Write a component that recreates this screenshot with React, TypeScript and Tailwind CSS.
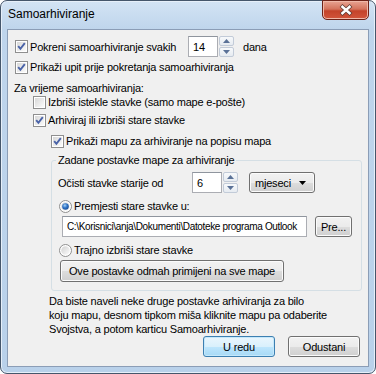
import React from 'react';

const btnBase =
  'flex items-center rounded-[3px] border border-[#707070] bg-[linear-gradient(to_bottom,#f2f2f2_0%,#ebebeb_50%,#dddddd_51%,#cfcfcf_100%)] shadow-[inset_0_0_0_1px_#fbfbfb] text-black';
const btn = `${btnBase} justify-center`;

function Check({ checked }: { checked?: boolean }) {
  return (
    <svg width="13" height="13" viewBox="0 0 13 13" className="shrink-0">
      <defs>
        <linearGradient id="cbfill" x1="0" y1="0" x2="1" y2="1">
          <stop offset="0" stopColor="#d8d8d8" />
          <stop offset="1" stopColor="#fbfbfb" />
        </linearGradient>
      </defs>
      <rect x="0.5" y="0.5" width="12" height="12" fill="#fff" stroke="#8f8f8f" />
      <rect x="2" y="2" width="9" height="9" fill="url(#cbfill)" />
      {checked && (
        <path d="M3.2 6.2 L5.4 8.8 L9.8 3.2" fill="none" stroke="#4a63a8" strokeWidth="1.9" />
      )}
    </svg>
  );
}

function Radio({ checked }: { checked?: boolean }) {
  return (
    <svg width="13" height="13" viewBox="0 0 13 13" className="shrink-0">
      <defs>
        <linearGradient id="rbfill" x1="0" y1="0" x2="1" y2="1">
          <stop offset="0" stopColor="#d2d2d2" />
          <stop offset="1" stopColor="#fcfcfc" />
        </linearGradient>
        <radialGradient id="rbdot" cx="0.4" cy="0.35" r="0.7">
          <stop offset="0" stopColor="#a9d3f5" />
          <stop offset="0.5" stopColor="#2f74c8" />
          <stop offset="1" stopColor="#1b4e92" />
        </radialGradient>
      </defs>
      <circle cx="6.5" cy="6.5" r="6" fill="#fff" stroke="#8f8f8f" />
      <circle cx="6.5" cy="6.5" r="4.3" fill="url(#rbfill)" />
      {checked && <circle cx="6.5" cy="6.5" r="3.3" fill="url(#rbdot)" />}
    </svg>
  );
}

function Spin() {
  const part =
    'flex h-[10px] w-[15px] items-center justify-center rounded-[2px] border border-[#c2cbd8] bg-[linear-gradient(to_bottom,#f7f9fb,#e6ebf1)]';
  return (
    <div className="ml-[1px] flex h-[21px] flex-col justify-between">
      <div className={part}>
        <svg width="7" height="4" viewBox="0 0 7 4">
          <path d="M0 4 L3.5 0 L7 4 Z" fill="#5a7197" />
        </svg>
      </div>
      <div className={part}>
        <svg width="7" height="4" viewBox="0 0 7 4">
          <path d="M0 0 L3.5 4 L7 0 Z" fill="#5a7197" />
        </svg>
      </div>
    </div>
  );
}

function Field({ value, w }: { value: string; w: string }) {
  return (
    <div
      className={`flex h-[21px] items-center border border-[#abadb3] border-t-[#8f959e] bg-white pl-[4px] ${w}`}
    >
      {value}
    </div>
  );
}

export default function App() {
  return (
    <div className="h-[374px] w-[376px] bg-white font-['Liberation_Sans',Arial,sans-serif] text-[11px] leading-[14px] tracking-[-0.2px] text-black">
      <div className="relative flex h-[374px] w-[376px] flex-col rounded-[7px] border border-[#45566b] bg-[linear-gradient(to_bottom,#d3e3f4_0px,#bfd5ec_28px,#b9d1ea_100%)] px-[6px] pb-[6px] shadow-[inset_0_0_0_1px_#e6eff9]">
        {/* title bar */}
        <div className="flex h-[28px] items-center pb-[2px] pl-[1px] text-[12px] tracking-normal">Samoarhiviranje</div>
        <div className="absolute right-[6px] top-[-1px] flex h-[20px] w-[47px] items-center justify-center rounded-b-[5px] border border-[#6e2318] bg-[linear-gradient(to_bottom,#e8a493_0%,#d4735c_45%,#c4432a_55%,#d2553b_100%)] shadow-[inset_0_0_0_1px_#f0b8a8]">
          <svg width="14" height="12" viewBox="0 0 14 12">
            <path d="M2 1.5 L12 10.5 M12 1.5 L2 10.5" stroke="#5d3a33" strokeWidth="4" />
            <path d="M2.5 2 L11.5 10 M11.5 2 L2.5 10" stroke="#ffffff" strokeWidth="2.4" />
          </svg>
        </div>

        {/* client area */}
        <div className="flex h-[338px] flex-col border border-[#8b9db6] bg-[#f0f0f0] pl-[7px] pt-[6px]">
          <div className="flex h-[21px] items-center">
            <Check checked />
            <span className="w-[160px] pl-[2px]">Pokreni samoarhiviranje svakih</span>
            <Field value="14" w="w-[30px]" />
            <Spin />
            <span className="ml-[9px]">dana</span>
          </div>
          <div className="mt-[2px] flex h-[16px] items-center">
            <Check checked />
            <span className="pl-[2px]">Prikaži upit prije pokretanja samoarhiviranja</span>
          </div>
          <div className="ml-[-1px] mt-[6px] flex h-[14px] items-center">Za vrijeme samoarhiviranja:</div>
          <div className="ml-[18px] flex h-[14px] items-center">
            <Check />
            <span className="pl-[2px]">Izbriši istekle stavke (samo mape e-pošte)</span>
          </div>
          <div className="ml-[18px] mt-[4px] flex h-[14px] items-center">
            <Check checked />
            <span className="pl-[2px]">Arhiviraj ili izbriši stare stavke</span>
          </div>
          <div className="ml-[36px] mt-[7px] flex h-[14px] items-center">
            <Check checked />
            <span className="pl-[2px]">Prikaži mapu za arhiviranje na popisu mapa</span>
          </div>

          <fieldset className="ml-[36px] mt-[5px] w-[311px] rounded-[3px] border border-[#d5dfe5] pb-[8px] pl-[4px] pt-[5px]">
            <legend className="px-[2px] leading-[14px]">Zadane postavke mape za arhiviranje</legend>
            <div className="flex h-[21px] items-center pl-[2px]">
              <span className="w-[134px]">Očisti stavke starije od</span>
              <Field value="6" w="w-[30px]" />
              <Spin />
              <div className={`${btnBase} ml-[11px] h-[21px] w-[66px] justify-between pl-[5px] pr-[8px]`}>
                <span>mjeseci</span>
                <svg width="7" height="4" viewBox="0 0 7 4">
                  <path d="M0 0 L3.5 4 L7 0 Z" fill="#000" />
                </svg>
              </div>
            </div>
            <div className="ml-[3px] mt-[6px] flex h-[14px] items-center">
              <Radio checked />
              <span className="pl-[2px]">Premjesti stare stavke u:</span>
            </div>
            <div className="ml-[6px] mt-[3px] flex items-center">
              <Field
                value="C:\Korisnici\anja\Dokumenti\Datoteke programa Outlook"
                w="w-[245px] pl-[2px] text-[10px] tracking-[-0.35px] whitespace-nowrap overflow-hidden"
              />
              <div className={`${btn} ml-[8px] h-[21px] w-[37px]`}>Pre...</div>
            </div>
            <div className="ml-[3px] mt-[6px] flex h-[14px] items-center">
              <Radio />
              <span className="pl-[2px]">Trajno izbriši stare stavke</span>
            </div>
            <div className={`${btn} ml-[4px] mt-[3px] h-[22px] w-[224px]`}>Ove postavke odmah primijeni na sve mape</div>
          </fieldset>

          <p className="ml-[34px] mt-[3px] leading-[14px]">
            Da biste naveli neke druge postavke arhiviranja za bilo
            <br />
            koju mapu, desnom tipkom miša kliknite mapu pa odaberite
            <br />
            Svojstva, a potom karticu Samoarhiviranje.
          </p>

          <div className="flex justify-end gap-[13px] pr-[8px]">
            <div className="flex h-[21px] w-[72px] items-center justify-center rounded-[3px] border border-[#3c7fb1] bg-[linear-gradient(to_bottom,#eaf6fd_0%,#d9f0fc_50%,#bee6fd_51%,#a7d9f5_100%)] shadow-[inset_0_0_0_1px_#c5e8fb]">
              U redu
            </div>
            <div className={`${btn} h-[21px] w-[72px]`}>Odustani</div>
          </div>
        </div>
      </div>
    </div>
  );
}
